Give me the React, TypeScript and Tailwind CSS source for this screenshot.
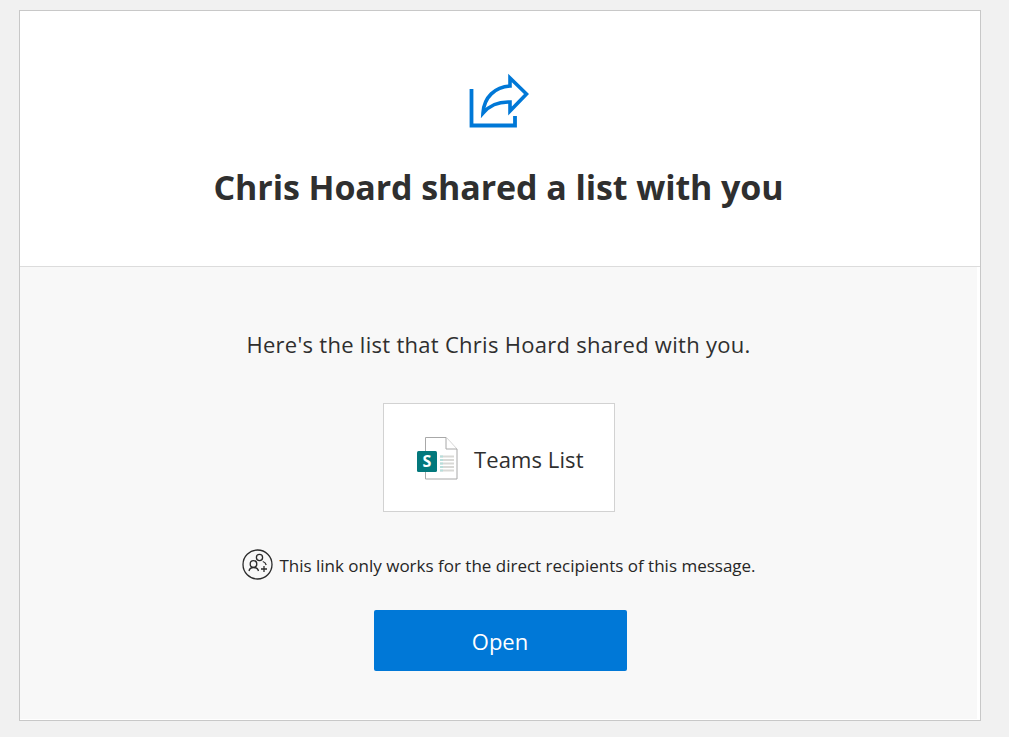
export default function App() {
  return (
    <div className="min-h-[737px] bg-[#f1f1f1] pt-[10px] pl-[19px] text-[#2f2f2f]" style={{ fontFamily: '"Open Sans", "Noto Sans", "Liberation Sans", sans-serif' }}>
      <div className="w-[962px] h-[711px] border border-[#c8c8c8] bg-white flex flex-col">
        <div className="h-[256px] border-b border-[#dcdcdc] flex flex-col items-center pr-[3px]">
          <svg className="mt-[62px]" width="60" height="56" viewBox="0 0 60 56" fill="none">
            <path d="M2.500 16 V52.500 H46 V43" stroke="#0078d7" strokeWidth="3.800" />
            <path d="M14 40 C15 24 26 14 41 13 V5 L57.500 21 L41 38 V29 C29 28.500 20 33 14 40 Z" stroke="#0078d7" strokeWidth="3.600" strokeLinejoin="miter" fill="white" />
          </svg>
          <h1 className="mt-[35px] text-[34px] leading-[46px] font-bold tracking-[-0.1px] text-[#2f2f2f]">Chris Hoard shared a list with you</h1>
        </div>
        <div className="flex-1 flex flex-col items-center bg-[#f8f8f8] mr-[3px] mb-[1px]">
          <p className="mt-[61px] text-[22px] leading-[32px] tracking-[0.28px]">Here's the list that Chris Hoard shared with you.</p>
          <div className="mt-[43px] w-[232px] h-[109px] border border-[#d2d2d2] bg-white flex items-center gap-[16px] pl-[32px] ml-[1px]">
            <svg width="42" height="44" viewBox="0 0 42 44" fill="none">
              <path d="M9.500 1.500 H30 L41 13 V43 H9.500 Z" fill="white" stroke="#a8a8a8" strokeWidth="1" />
              <path d="M30 1.500 V13 H41" fill="white" stroke="#a8a8a8" strokeWidth="1" />
              <path d="M24 20.500 H38 M24 24 H38 M24 27.500 H38 M24 31 H38 M24 34.500 H38" stroke="#d9d9d6" strokeWidth="2" />
              <path d="M24 20.500 H27 M24 24 H27 M24 27.500 H27 M24 31 H27 M24 34.500 H27" stroke="#b7dedb" strokeWidth="2" />
              <rect x="1" y="15" width="20" height="21" rx="1.500" fill="#03787c" />
              <text x="11" y="31" textAnchor="middle" fontSize="16" fontWeight="700" fill="white" fontFamily="Open Sans">S</text>
            </svg>
            <span className="text-[22px] leading-[30px] tracking-[0.1px] pt-[2px]">Teams List</span>
          </div>
          <div className="mt-[37px] flex items-center gap-[6px] ml-[1px]">
            <svg width="31" height="31" viewBox="0 0 31 31" fill="none" stroke="#2b2b2b" strokeWidth="1.300">
              <circle cx="15.500" cy="15.500" r="14.500" />
              <circle cx="17.500" cy="8.500" r="3.100" />
              <circle cx="11.500" cy="15" r="3.300" />
              <path d="M7 22 C7.500 19.500 9 18.500 11.500 18.500 C14 18.500 15.800 19.500 16.500 22" />
              <path d="M20.800 12.500 C22.500 13 23.800 14.500 24.200 16" />
              <path d="M22 17 V23 M19 20 H25" />
            </svg>
            <span className="text-[17px] leading-[24px] text-[#262626] pt-[2px]">This link only works for the direct recipients of this message.</span>
          </div>
          <button className="mt-[30px] ml-[3px] w-[253px] h-[61px] pt-[1px] rounded-[2px] bg-[#0078d7] text-white text-[22px] leading-[30px]">Open</button>
        </div>
      </div>
    </div>
  );
}
